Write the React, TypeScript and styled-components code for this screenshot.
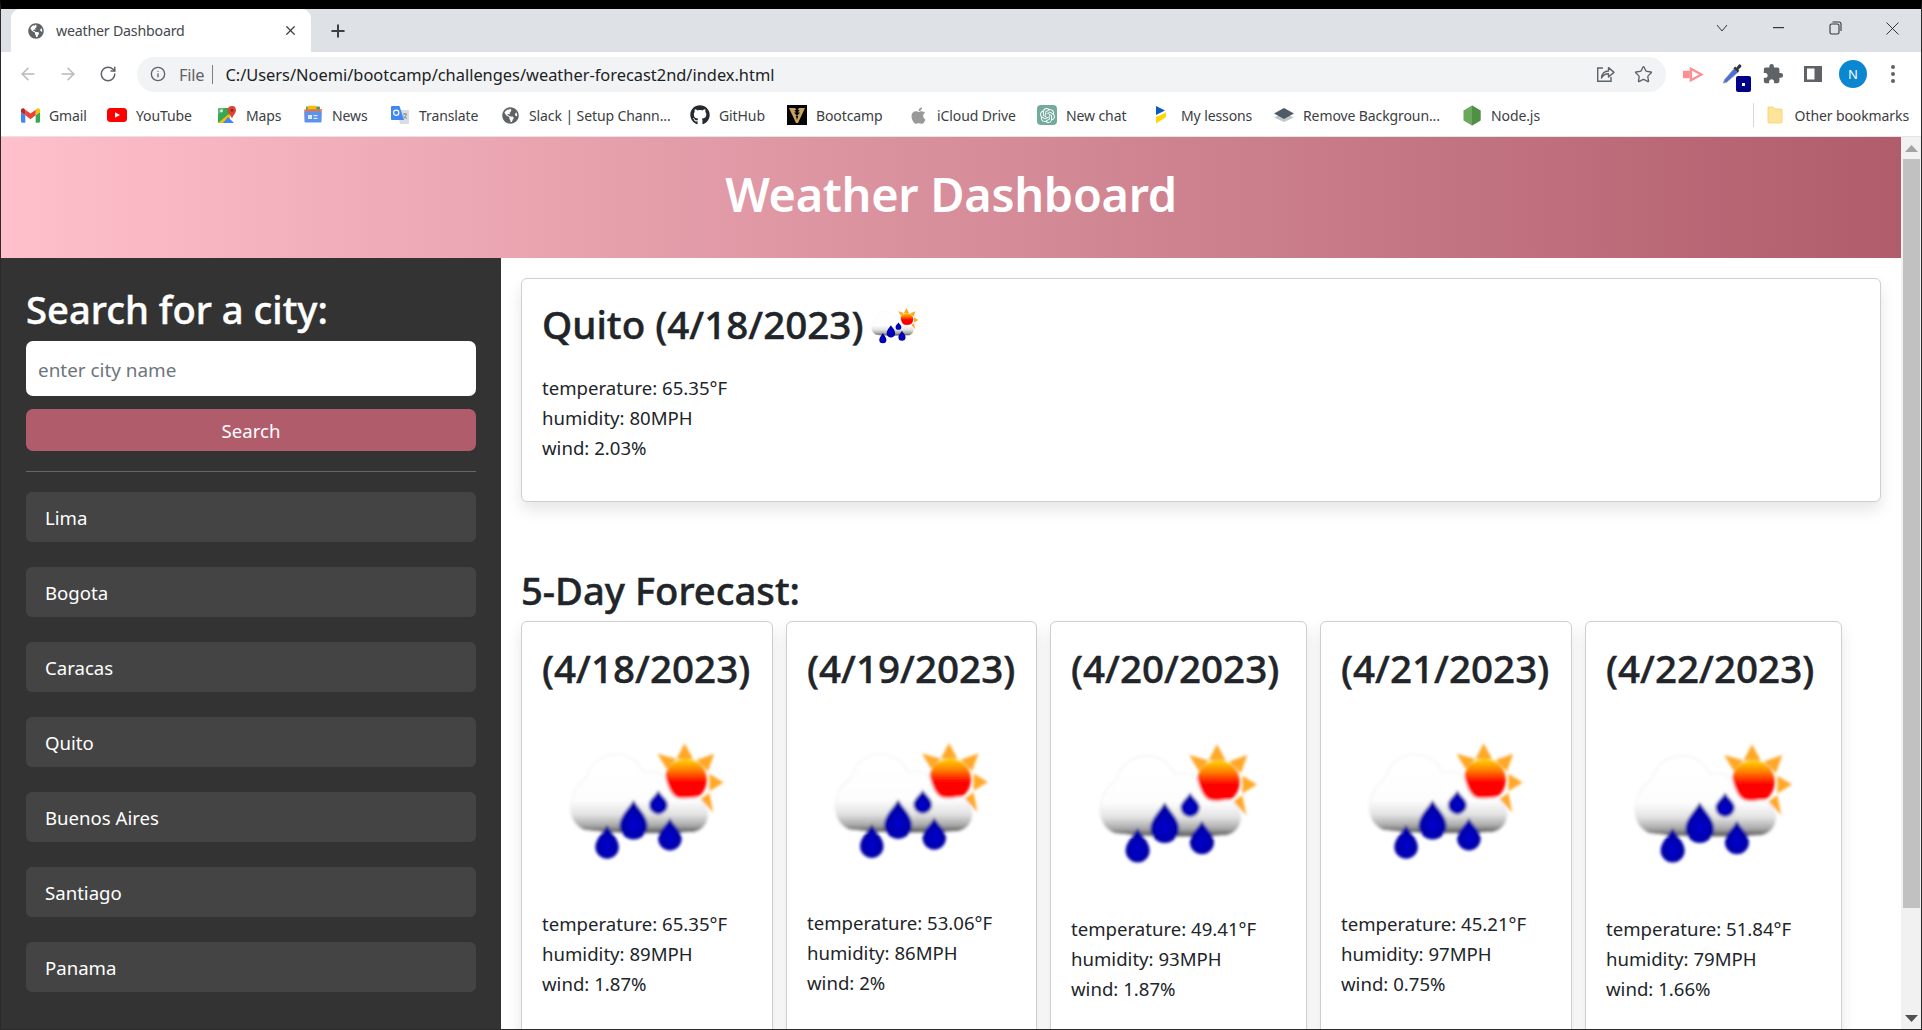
import React from "react";
import styled, { createGlobalStyle } from "styled-components";
import { ArrowLeft, ArrowRight, RotateCw, Info, Star, X, Plus } from "lucide-react";
import { FaGlobeAmericas, FaGithub, FaApple } from "react-icons/fa";
import { SiOpenai } from "react-icons/si";
import { MdExtension } from "react-icons/md";

const UI = `"Noto Sans", "Open Sans", "Liberation Sans", sans-serif`;

const Global = createGlobalStyle`
  html, body { margin: 0; padding: 0; width: 100%; height: 100%; overflow: hidden; background: #fff; }
  #root { height: 100%; }
  * { box-sizing: border-box; }
`;

const Frame = styled.div`
  height: 1030px; width: 1922px; display: flex; flex-direction: column; overflow: hidden;
  border-top: 9px solid #000; border-left: 1px solid #2a2a2a; border-right: 1px solid #2a2a2a; border-bottom: 1px solid #2a2a2a;
  font-family: ${UI}; background: #fff;
`;
const TabStrip = styled.div`
  height: 43px; flex: none; background: #dee1e6; display: flex; align-items: flex-end; padding-left: 10px; position: relative;
`;
const Tab = styled.div`
  width: 300px; height: 43px; background: #fff; border-radius: 9px 9px 0 0; display: flex; align-items: center;
  padding: 0 13px 0 17px; color: #45484c; font-size: 14.2px; letter-spacing: -0.2px;
`;
const TabTitle = styled.span`margin-left: 12px; flex: 1; white-space: nowrap;`;
const NewTab = styled.div`width: 54px; height: 43px; display: flex; align-items: center; justify-content: center; color: #3c4043;`;
const WindowControls = styled.div`margin-left: auto; display: flex; height: 43px; align-self: flex-start;`;
const WinButton = styled.div`width: 57px; height: 38px; display: flex; align-items: center; justify-content: center; color: #33363a;`;

const Toolbar = styled.div`
  height: 44px; flex: none; background: #fff; display: flex; align-items: center; padding: 0 8px 0 7px;
`;
const NavButton = styled.div<{ $dim?: boolean }>`
  width: 40px; height: 40px; flex: none; display: flex; align-items: center; justify-content: center;
  color: ${(p) => (p.$dim ? "#b6b8ba" : "#5f6368")}; position: relative;
`;
const Omnibox = styled.div`
  flex: 1; height: 35px; margin: 0 7px 0 9px; border-radius: 18px; background: #f1f3f4; display: flex; align-items: center;
  padding: 0 3px 0 13px; font-size: 16.4px; color: #202124;
`;
const FileLabel = styled.span`margin-left: 13px; color: #5f6368; letter-spacing: -0.2px;`;
const OmniSep = styled.span`width: 1px; height: 19px; background: #7b7e82; margin: 0 12px 0 8px;`;
const Url = styled.span`white-space: nowrap; flex: 1;`;
const OmniAction = styled.div`width: 39px; display: flex; align-items: center; justify-content: center; color: #5f6368;`;
const Avatar = styled.div`
  width: 28px; height: 28px; border-radius: 50%; background: #0b86d1; color: #fff; font-size: 13px;
  display: flex; align-items: center; justify-content: center;
`;
const Badge = styled.span`
  position: absolute; right: 2px; bottom: 2px; width: 15px; height: 16px; border-radius: 2px; background: #00008b;
  display: flex; align-items: center; justify-content: center;
  &::after { content: ""; width: 3px; height: 3px; background: #fff; }
`;

const Bookmarks = styled.div`
  height: 41px; flex: none; background: #fff; display: flex; align-items: center; padding: 0 0 2px 11px; border-bottom: 1px solid #e4e4e4;
`;
const Bookmark = styled.div<{ $w: number }>`
  width: ${(p) => p.$w}px; flex: none; display: flex; align-items: center; padding-left: 8px; color: #3c4043;
  font-size: 14px; letter-spacing: -0.1px; white-space: nowrap;
`;
const BmIcon = styled.span`width: 20px; height: 20px; flex: none; margin-right: 9px; display: flex; align-items: center; justify-content: center;`;
const OtherBookmarks = styled.div`
  margin-left: auto; display: flex; align-items: center; height: 24px; padding-left: 13px; margin-right: 12px;
  border-left: 1px solid #d5d7da; font-size: 14px; letter-spacing: -0.1px; color: #3c4043; white-space: nowrap;
`;

const Viewport = styled.div`flex: 1; min-height: 0; display: flex; overflow: hidden;`;
const Page = styled.div`flex: 1; min-width: 0; display: flex; flex-direction: column; overflow: hidden;`;
const Header = styled.header`
  height: 121px; flex: none; background: linear-gradient(to right, #ffc0cb, #b05c6b); color: #fff;
  display: flex; align-items: center; justify-content: center; padding-bottom: 7px;
`;
const Title = styled.h1`margin: 0; font-size: 46.9px; font-weight: 600; line-height: 1.2; letter-spacing: -0.3px;`;
const Content = styled.div`flex: 1; min-height: 0; display: flex;`;
const Sidebar = styled.aside`
  width: 500px; flex: none; background: #333; padding: 27px 25px 0; display: flex; flex-direction: column; overflow: hidden;
`;
const SideTitle = styled.h2`
  margin: 0 0 8px; color: #fff; font-size: 38.2px; font-weight: 500; -webkit-text-stroke: 0.45px currentColor;
  line-height: 48px; white-space: nowrap;
`;
const CityInput = styled.input`
  height: 55px; flex: none; width: 100%; border: 0; border-radius: 7px; padding: 2px 12px 0; font: 18.9px ${UI}; color: #212529;
  background: #fff; outline: none;
  &::placeholder { color: #6c757d; opacity: 1; }
`;
const SearchButton = styled.button`
  height: 42px; flex: none; margin-top: 13px; border: 0; border-radius: 7px; background: #b05c6b; color: #fff; font: 18.6px ${UI}; padding: 0;
`;
const Rule = styled.hr`height: 1px; width: 100%; border: 0; margin: 20px 0; background: #666; flex: none;`;
const CityList = styled.div`display: flex; flex-direction: column; gap: 25px;`;
const CityButton = styled.div`
  height: 50px; flex: none; background: #444; border-radius: 6px; color: #fff; font-size: 18.6px; display: flex; align-items: center; padding: 0 19px;
`;
const Main = styled.main`flex: 1; min-width: 0; padding: 20px 20px 0; color: #212529; overflow: hidden;`;
const Card = styled.section`
  background: #fff; border: 1px solid #cfcfcf; border-radius: 6px; box-shadow: 0 8px 16px rgba(0, 0, 0, 0.1);
`;
const TodayCard = styled(Card)`height: 224px; padding: 14px 20px 0;`;
const TodayTitle = styled.h2`
  margin: 0 0 18px; height: 62px; display: flex; align-items: center; font-size: 38.6px; font-weight: 500;
  -webkit-text-stroke: 0.45px currentColor; white-space: nowrap;
`;
const Stat = styled.p`margin: 0; font-size: 18.6px; line-height: 30px; white-space: nowrap;`;
const ForecastTitle = styled.h2`
  margin: 64px 0 7px; font-size: 38.2px; font-weight: 500; -webkit-text-stroke: 0.45px currentColor; line-height: 48px;
`;
const ForecastRow = styled.div`display: flex; gap: 13px; align-items: flex-start;`;
const DayCard = styled(Card)<{ $w: number }>`
  width: ${(p) => p.$w}px; flex: none; height: 520px; padding: 22px 20px 0; 
`;
const DayDate = styled.h2`
  margin: 0 0 5px; font-size: 38.6px; font-weight: 500; -webkit-text-stroke: 0.45px currentColor; line-height: 48px; white-space: nowrap;
`;
const DayIcon = styled.div`width: 100%; aspect-ratio: 1 / 1; margin-bottom: 2px;`;
const MiniIcon = styled.span`width: 64px; height: 64px; flex: none; margin: 4px 0 0 0;`;

const Scrollbar = styled.div`width: 20px; flex: none; background: #f1f1f1; display: flex; flex-direction: column; align-items: center;`;
const ScrollButton = styled.div`height: 22px; flex: none; display: flex; align-items: center; justify-content: center;`;
const Thumb = styled.div`width: 17px; height: 749px; flex: none; background: #c1c1c1;`;
const ScrollRest = styled.div`flex: 1;`;

function WeatherIcon({ id }: { id: string }) {
  return (
    <svg viewBox="0 0 100 100" width="100%" height="100%" style={{ display: "block" }}>
      <defs>
        <filter id={`${id}b`} x="-10%" y="-10%" width="120%" height="120%"><feGaussianBlur stdDeviation="0.65" /></filter>
        <linearGradient id={`${id}c`} x1="0" y1="0" x2="0" y2="1">
          <stop offset="0" stopColor="#fff" />
          <stop offset="0.58" stopColor="#fdfdfd" />
          <stop offset="0.76" stopColor="#e2e2e2" />
          <stop offset="0.9" stopColor="#a8a8a8" />
          <stop offset="1" stopColor="#4a4a4a" />
        </linearGradient>
        <linearGradient id={`${id}s`} x1="0" y1="0" x2="0" y2="1">
          <stop offset="0" stopColor="#ffd400" />
          <stop offset="0.28" stopColor="#ff7a00" />
          <stop offset="0.55" stopColor="#ff0000" />
        </linearGradient>
        <radialGradient id={`${id}d`} cx="0.5" cy="0.62" r="0.55">
          <stop offset="0" stopColor="#0000d0" />
          <stop offset="1" stopColor="#000098" />
        </radialGradient>
      </defs>
      <g filter={`url(#${id}b)`}>
        <g fill="#ffa726">
          <polygon points="67.9,22 64,29.5 72,29.5" />
          <polygon points="55,27 59.5,34.5 64,29.5" />
          <polygon points="82,27 73.5,30 79,35.5" />
          <polygon points="86.5,40.7 79.7,36.6 79.7,44.9" />
          <polygon points="81.5,55 75.5,48.6 79.7,45.7" />
        </g>
        <circle cx="68.5" cy="39.5" r="10" fill={`url(#${id}s)`} />
        <path
          d="M20 63.5 C14.5 61 12.6 55 13.8 50.5 C14.6 45 17 41 21 38.5 C23 31 29 27.2 36 27.4 C42 27.6 46 31 48.6 36 C52 34.8 56 35.6 58.5 37.8 C59.5 42 61 47 64.5 48.2 C68 49 72 48 74 48 C78 51 79.6 54 79 57.5 C78.4 61 76 63.6 72.5 64.4 C55 65.4 35 65.4 20 63.5 Z"
          fill={`url(#${id}c)`} stroke="#f0f0f0" strokeWidth="0.5"
        />
        <g fill={`url(#${id}d)`}>
          <path d="M43.6 49 C45.5 52.5 50.3 56.5 50.3 61.2 A6.7 6.7 0 0 1 36.9 61.2 C36.9 56.5 41.7 52.5 43.6 49 Z" />
          <path d="M55.4 44.4 C56.4 46.6 59.9 48.6 59.9 51.4 A4.5 4.5 0 0 1 50.9 51.4 C50.9 48.6 54.4 46.6 55.4 44.4 Z" />
          <path d="M60.9 57.6 C62.2 60.5 66.5 63.5 66.5 67.5 A5.6 5.6 0 0 1 55.3 67.5 C55.3 63.5 59.6 60.5 60.9 57.6 Z" />
          <path d="M31 60.8 C32.3 64 36.6 67.4 36.6 71.4 A5.6 5.6 0 0 1 25.4 71.4 C25.4 67.4 29.7 64 31 60.8 Z" />
        </g>
      </g>
    </svg>
  );
}

const Gmail = () => (
  <svg viewBox="0 0 24 24" width="19" height="19">
    <path fill="#4285F4" d="M1.636 21.002h3.819V11.73L0 7.638v11.727c0 .904.732 1.637 1.636 1.637" />
    <path fill="#34A853" d="M18.545 21.002h3.819c.904 0 1.636-.733 1.636-1.637V7.638l-5.455 4.092" />
    <path fill="#FBBC04" d="M18.545 4.64v7.09L24 7.638V5.456c0-2.023-2.31-3.178-3.927-1.964" />
    <path fill="#EA4335" d="M5.455 11.73V4.64L12 9.548l6.545-4.908v7.09L12 16.638" />
    <path fill="#C5221F" d="M0 5.456v2.182l5.455 4.092V4.64L3.927 3.492C2.31 2.278 0 3.433 0 5.456" />
  </svg>
);
const YouTube = () => (
  <svg viewBox="0 0 20 20" width="20" height="20">
    <rect x="0" y="3" width="20" height="14" rx="3.5" fill="#f00" />
    <path d="M8 7.2 L13 10 L8 12.8 Z" fill="#fff" />
  </svg>
);
const Maps = () => (
  <svg viewBox="0 0 20 20" width="20" height="20">
    <path d="M1 3 H13 V18 H1 Z" fill="#34a853" />
    <path d="M1 18 L13 8 V18 Z" fill="#fbbc04" />
    <path d="M6 18 L11 12 L17 18 Z" fill="#4285f4" />
    <path d="M1 3 H8 L1 10 Z" fill="#5bb974" />
    <circle cx="4.5" cy="6" r="1.4" fill="#e6f4ea" />
    <path d="M15 1 C12 1 10.5 3.2 10.5 5.2 C10.5 8 13.6 10 15 13.5 C16.4 10 19 8 19 5.2 C19 3.2 18 1 15 1 Z" fill="#db4437" />
    <circle cx="15" cy="5.2" r="1.5" fill="#8c2a20" />
  </svg>
);
const News = () => (
  <svg viewBox="0 0 20 20" width="20" height="20">
    <rect x="3" y="1.5" width="14" height="6" rx="1" fill="#34a853" />
    <rect x="4.5" y="0.8" width="9" height="4" rx="1" fill="#fbbc04" />
    <path d="M1 4.5 L19 4 L18 17 H2 Z" fill="#e8705f" opacity="0.9" />
    <rect x="1.5" y="6.5" width="17" height="11" rx="1.2" fill="#5c93ec" />
    <rect x="5" y="10" width="4" height="4" fill="#dfe9fb" />
    <rect x="10.5" y="10" width="4" height="1.2" fill="#dfe9fb" />
    <rect x="10.5" y="12.8" width="4" height="1.2" fill="#dfe9fb" />
  </svg>
);
const TranslateIcon = () => (
  <svg viewBox="0 0 20 20" width="20" height="20">
    <path d="M7 5 H18 A1 1 0 0 1 19 6 V18 A1 1 0 0 1 18 19 H10 Z" fill="#dadce0" />
    <path d="M13 9 H17 M15 8 V9.5 M13.8 13.5 C15 12.5 16 11 16.4 9.2 M13.7 10.8 C14.3 12 15.5 13 17 13.5" stroke="#80868b" strokeWidth="0.9" fill="none" />
    <path d="M2 1 H9.5 L14 15 H2 A1 1 0 0 1 1 14 V2 A1 1 0 0 1 2 1 Z" fill="#4285f4" />
    <circle cx="6.2" cy="7.8" r="2.6" fill="none" stroke="#fff" strokeWidth="1.2" />
  </svg>
);
const Bootcamp = () => (
  <svg viewBox="0 0 20 20" width="20" height="20">
    <rect width="20" height="20" fill="#050505" />
    <path d="M2 3 H8 L10 6 L12 3 H18 L11 18 H9 Z" fill="#c9a35b" />
    <path d="M7.5 5 H12.5 L11 7.5 H13 L10 11 L11.2 11 L10 15 L8.8 11 L10 11 L7 7.5 H9 Z" fill="#050505" />
  </svg>
);
const ChatBox = styled.span`
  width: 20px; height: 20px; border-radius: 4px; background: #74aa9c; display: flex; align-items: center; justify-content: center;
`;
const ChatGpt = () => (
  <ChatBox><SiOpenai size={15} color="#fff" /></ChatBox>
);
const Lessons = () => (
  <svg viewBox="0 0 14 20" width="14" height="20">
    <path d="M1 1 L10 5.5 L1 10 Z" fill="#0a5bbd" />
    <path d="M1 12 L11 7.5 V12 L1 18.5 Z" fill="#ffd600" />
  </svg>
);
const RemoveBg = () => (
  <svg viewBox="0 0 20 20" width="21" height="20">
    <path d="M10 8 L20 12.5 L10 17 L0 12.5 Z" fill="#c3c8cd" />
    <path d="M10 3 L20 8.5 L10 14 L0 8.5 Z" fill="#4f5b67" />
  </svg>
);
const NodeIcon = () => (
  <svg viewBox="0 0 18 20" width="18" height="21">
    <path d="M9 0 L17.5 5 V15 L9 20 L0.5 15 V5 Z" fill="#6aa85f" />
    <path d="M9 0 L17.5 5 V15 L9 20 Z" fill="#4f8f46" />
  </svg>
);
const Folder = () => (
  <svg viewBox="0 0 16 20" width="16" height="20" style={{ marginRight: 12 }}>
    <path d="M1 2 H6 L8 4 H14 A1 1 0 0 1 15 5 V17 A1 1 0 0 1 14 18 H2 A1 1 0 0 1 1 17 Z" fill="#fde49b" stroke="#f6cf6a" strokeWidth="0.8" />
  </svg>
);
const ShareIcon = () => (
  <svg viewBox="0 0 20 20" width="20" height="20" fill="none" stroke="#5f6368" strokeWidth="1.4">
    <path d="M8 4 H2.7 V17.3 H16 V13" />
    <path d="M6.5 14 C7 9.5 10 7 13.5 7 V3.6 L19 8.4 L13.5 13 V9.8 C10.5 9.8 8 11 6.5 14 Z" strokeLinejoin="round" />
  </svg>
);
const RedExt = () => (
  <svg viewBox="0 0 20 16" width="21" height="17">
    <rect x="0" y="4.5" width="6.5" height="7" fill="#ff8d92" />
    <path d="M7.5 2.5 L17.5 8 L7.5 13.5 Z" fill="#fff" stroke="#ff8d92" strokeWidth="2.2" />
  </svg>
);
const Dropper = () => (
  <svg viewBox="0 0 24 24" width="23" height="23" style={{ position: "absolute", left: 8, top: 8 }}>
    <path d="M13.8 6.8 L3.6 18.6 L2.6 22 L6 21 L17.6 10.8 Z" fill="#4a6bd8" stroke="#9aa0a6" strokeWidth="1" />
    <path d="M13 6.5 L14.8 4.8 L16 6 L18.5 2.8 C19.6 1.6 22.2 3.8 21 5.2 L18 8 L19.2 9.2 L17.5 11 Z" fill="#33373b" />
  </svg>
);
const Panel = () => (
  <svg viewBox="0 0 18 18" width="18" height="18">
    <path fillRule="evenodd" d="M0 1 H18 V17 H0 Z M3 3.4 V14.6 H10.5 V3.4 Z" fill="#5f6368" />
  </svg>
);
const Kebab = () => (
  <svg viewBox="0 0 4 18" width="4" height="18" fill="#5f6368">
    <circle cx="2" cy="2" r="2" /><circle cx="2" cy="9" r="2" /><circle cx="2" cy="16" r="2" />
  </svg>
);
const Chevron = () => (
  <svg width="12" height="8" viewBox="0 0 12 8" fill="none" stroke="currentColor" strokeWidth="1"><path d="M1 1 L6 7 L11 1" /></svg>
);
const Minimize = () => (
  <svg width="11" height="2" viewBox="0 0 11 2"><rect width="11" height="1.2" fill="currentColor" /></svg>
);
const Restore = () => (
  <svg width="13" height="14" viewBox="0 0 13 14" fill="none" stroke="currentColor" strokeWidth="1.1">
    <rect x="1" y="3" width="9" height="10" rx="1.6" /><path d="M3.5 1 H10 A2 2 0 0 1 12 3 V10" />
  </svg>
);
const CloseWin = () => (
  <svg width="13" height="13" viewBox="0 0 13 13" stroke="currentColor" strokeWidth="1"><path d="M0.5 0.5 L12.5 12.5 M12.5 0.5 L0.5 12.5" /></svg>
);
const Up = () => (<svg width="13" height="7" viewBox="0 0 13 7"><path d="M6.5 0 L13 7 H0 Z" fill="#a3a3a3" /></svg>);
const Down = () => (<svg width="13" height="7" viewBox="0 0 13 7"><path d="M0 0 H13 L6.5 7 Z" fill="#505050" /></svg>);

const bookmarks: { label: string; w: number; icon: React.ReactNode }[] = [
  { label: "Gmail", w: 87, icon: <Gmail /> },
  { label: "YouTube", w: 110, icon: <YouTube /> },
  { label: "Maps", w: 86, icon: <Maps /> },
  { label: "News", w: 87, icon: <News /> },
  { label: "Translate", w: 110, icon: <TranslateIcon /> },
  { label: "Slack | Setup Chann...", w: 190, icon: <FaGlobeAmericas size={17} color="#5f6368" /> },
  { label: "GitHub", w: 97, icon: <FaGithub size={20} color="#24292f" /> },
  { label: "Bootcamp", w: 121, icon: <Bootcamp /> },
  { label: "iCloud Drive", w: 129, icon: <FaApple size={19} color="#999" /> },
  { label: "New chat", w: 115, icon: <ChatGpt /> },
  { label: "My lessons", w: 122, icon: <Lessons /> },
  { label: "Remove Backgroun...", w: 188, icon: <RemoveBg /> },
  { label: "Node.js", w: 90, icon: <NodeIcon /> },
];
const cities = ["Lima", "Bogota", "Caracas", "Quito", "Buenos Aires", "Santiago", "Panama"];
const days = [
  { date: "(4/18/2023)", t: "65.35", h: 89, w: "1.87", cw: 252 },
  { date: "(4/19/2023)", t: "53.06", h: 86, w: "2", cw: 251 },
  { date: "(4/20/2023)", t: "49.41", h: 93, w: "1.87", cw: 257 },
  { date: "(4/21/2023)", t: "45.21", h: 97, w: "0.75", cw: 252 },
  { date: "(4/22/2023)", t: "51.84", h: 79, w: "1.66", cw: 257 },
];

export default function App() {
  return (
    <Frame>
      <Global />
      <TabStrip>
        <Tab>
          <FaGlobeAmericas size={16} color="#5f6368" />
          <TabTitle>weather Dashboard</TabTitle>
          <X size={15} color="#3c4043" strokeWidth={2} />
        </Tab>
        <NewTab><Plus size={20} strokeWidth={2.4} /></NewTab>
        <WindowControls>
          <WinButton><Chevron /></WinButton>
          <WinButton><Minimize /></WinButton>
          <WinButton><Restore /></WinButton>
          <WinButton><CloseWin /></WinButton>
        </WindowControls>
      </TabStrip>
      <Toolbar>
        <NavButton $dim><ArrowLeft size={20} strokeWidth={1.8} /></NavButton>
        <NavButton $dim><ArrowRight size={20} strokeWidth={1.8} /></NavButton>
        <NavButton><RotateCw size={18} strokeWidth={2} /></NavButton>
        <Omnibox>
          <Info size={16} color="#5f6368" strokeWidth={2} />
          <FileLabel>File</FileLabel>
          <OmniSep />
          <Url>C:/Users/Noemi/bootcamp/challenges/weather-forecast2nd/index.html</Url>
          <OmniAction><ShareIcon /></OmniAction>
          <OmniAction><Star size={19} strokeWidth={1.7} /></OmniAction>
        </Omnibox>
        <NavButton><RedExt /></NavButton>
        <NavButton><Dropper /><Badge /></NavButton>
        <NavButton><MdExtension size={22} /></NavButton>
        <NavButton><Panel /></NavButton>
        <NavButton><Avatar>N</Avatar></NavButton>
        <NavButton><Kebab /></NavButton>
      </Toolbar>
      <Bookmarks>
        {bookmarks.map((b) => (
          <Bookmark key={b.label} $w={b.w}>
            <BmIcon>{b.icon}</BmIcon>
            {b.label}
          </Bookmark>
        ))}
        <OtherBookmarks><Folder />Other bookmarks</OtherBookmarks>
      </Bookmarks>
      <Viewport>
        <Page>
          <Header><Title>Weather Dashboard</Title></Header>
          <Content>
            <Sidebar>
              <SideTitle>Search for a city:</SideTitle>
              <CityInput placeholder="enter city name" readOnly />
              <SearchButton>Search</SearchButton>
              <Rule />
              <CityList>
                {cities.map((c) => <CityButton key={c}>{c}</CityButton>)}
              </CityList>
            </Sidebar>
            <Main>
              <TodayCard>
                <TodayTitle>Quito (4/18/2023)<MiniIcon><WeatherIcon id="today" /></MiniIcon></TodayTitle>
                <Stat>temperature: 65.35°F</Stat>
                <Stat>humidity: 80MPH</Stat>
                <Stat>wind: 2.03%</Stat>
              </TodayCard>
              <ForecastTitle>5-Day Forecast:</ForecastTitle>
              <ForecastRow>
                {days.map((d, i) => (
                  <DayCard key={d.date} $w={d.cw}>
                    <DayDate>{d.date}</DayDate>
                    <DayIcon><WeatherIcon id={`day${i}`} /></DayIcon>
                    <Stat>temperature: {d.t}°F</Stat>
                    <Stat>humidity: {d.h}MPH</Stat>
                    <Stat>wind: {d.w}%</Stat>
                  </DayCard>
                ))}
              </ForecastRow>
            </Main>
          </Content>
        </Page>
        <Scrollbar>
          <ScrollButton><Up /></ScrollButton>
          <Thumb />
          <ScrollRest />
          <ScrollButton><Down /></ScrollButton>
        </Scrollbar>
      </Viewport>
    </Frame>
  );
}
